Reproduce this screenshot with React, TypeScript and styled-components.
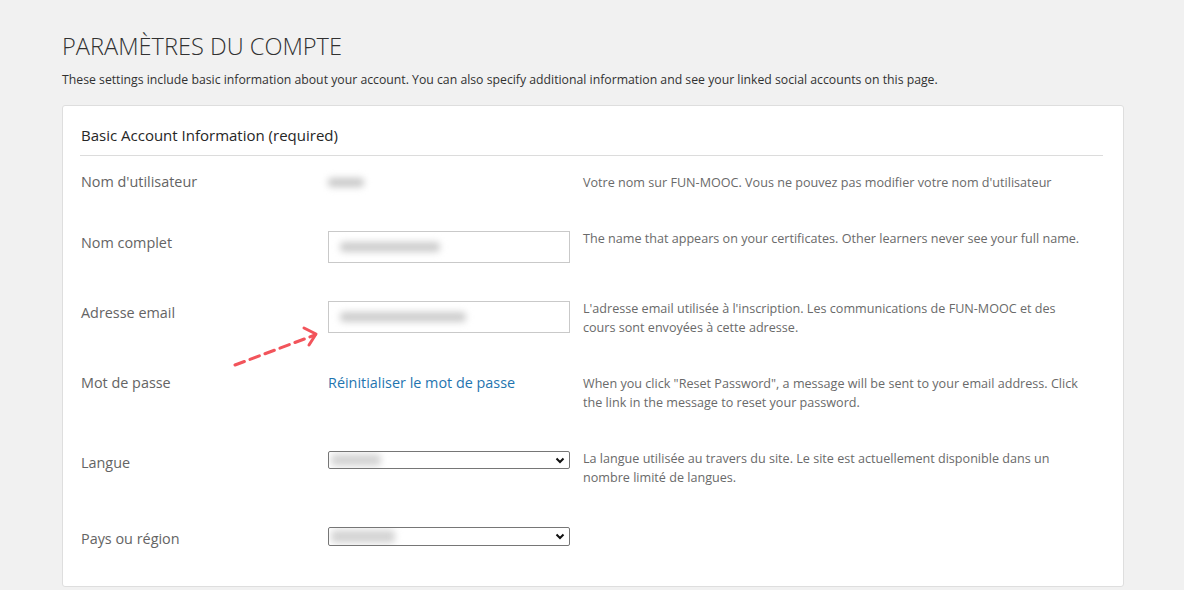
import React from "react";
import styled, { createGlobalStyle } from "styled-components";

const GlobalStyle = createGlobalStyle`
  html, body { margin: 0; padding: 0; }
  body {
    background: #f1f1f1;
    font-family: "Open Sans", "Noto Sans", "DejaVu Sans", sans-serif;
    color: #313131;
  }
`;

const Page = styled.main`
  padding: 32px 60px 0 62px;
`;

const Title = styled.h1`
  margin: 0;
  font-size: 23.6px;
  line-height: 29px;
  font-weight: 300;
  color: #313131;
`;

const Intro = styled.p`
  margin: 10px 0 0;
  font-size: 12.25px;
  line-height: 18px;
  color: #313131;
`;

const Card = styled.section`
  position: relative;
  margin-top: 16px;
  background: #fff;
  border: 1px solid #dedede;
  border-radius: 3px;
  padding: 0 20px 0 17px;
  height: 482px;
  box-sizing: border-box;
`;

const CardHeader = styled.h2`
  margin: 0;
  padding: 19px 0 10px 1px;
  font-size: 15px;
  line-height: 20px;
  font-weight: 400;
  color: #262626;
  border-bottom: 1px solid #dcdcdc;
`;

const Rows = styled.div`
  padding-top: 14px;
`;

const Row = styled.div<{ $h: number }>`
  display: grid;
  grid-template-columns: 235px 242px 502px;
  column-gap: 13px;
  align-items: start;
  height: ${(p) => p.$h}px;
`;

const Label = styled.div`
  margin-top: 2px;
  padding-left: 1px;
  font-size: 14.4px;
  line-height: 20px;
  color: #646464;
`;

const Help = styled.div<{ $offset: number }>`
  margin-top: ${(p) => p.$offset}px;
  font-size: 12.6px;
  line-height: 19px;
  color: #6a6a6a;
`;

const StaticValue = styled.div`
  height: 20px;
  margin-top: 2px;
  display: flex;
  align-items: center;
`;

const Blur = styled.span<{ $w: number; $h: number; $ml: number; $tone: string }>`
  display: block;
  width: ${(p) => p.$w}px;
  height: ${(p) => p.$h}px;
  margin-left: ${(p) => p.$ml}px;
  background: ${(p) => p.$tone};
  border-radius: 4px;
  filter: blur(3.5px);
`;

const TextField = styled.div`
  height: 32px;
  box-sizing: border-box;
  border: 1px solid #c9c9c9;
  background: #fff;
  display: flex;
  align-items: center;
  overflow: hidden;
`;

const Link = styled.a`
  display: block;
  margin-top: 2px;
  font-size: 14.4px;
  line-height: 20px;
  color: #1f75b0;
  text-decoration: none;
`;

const SelectBox = styled.div<{ $h: number }>`
  height: ${(p) => p.$h}px;
  box-sizing: border-box;
  border: 1px solid #767676;
  border-radius: 2px;
  background: #fff;
  display: flex;
  align-items: center;
  justify-content: space-between;
  padding-right: 4px;
  overflow: hidden;
`;

const Chevron = styled.svg`
  width: 10px;
  height: 7px;
  flex: none;
`;

const Annotation = styled.svg`
  position: absolute;
  left: 166px;
  top: 219px;
  width: 100px;
  height: 50px;
  overflow: visible;
`;

function Select({ h, w }: { h: number; w: number }) {
  return (
    <SelectBox $h={h}>
      <Blur $w={w} $h={h - 6} $ml={2} $tone="#d4d4d4" />
      <Chevron viewBox="0 0 10 7">
        <path d="M1.5 1.5 L5 5 L8.5 1.5" fill="none" stroke="#111" strokeWidth="2" />
      </Chevron>
    </SelectBox>
  );
}

export default function App() {
  return (
    <>
      <GlobalStyle />
      <Page>
        <Title>PARAMÈTRES DU COMPTE</Title>
        <Intro>
          These settings include basic information about your account. You can also specify additional
          information and see your linked social accounts on this page.
        </Intro>
        <Card>
          <CardHeader>Basic Account Information (required)</CardHeader>
          <Rows>
            <Row $h={61}>
              <Label>Nom d'utilisateur</Label>
              <StaticValue>
                <Blur $w={36} $h={9} $ml={0} $tone="#c8c8c8" />
              </StaticValue>
              <Help $offset={3}>
                Votre nom sur FUN-MOOC. Vous ne pouvez pas modifier votre nom d'utilisateur
              </Help>
            </Row>
            <Row $h={70}>
              <Label>Nom complet</Label>
              <TextField>
                <Blur $w={100} $h={10} $ml={11} $tone="#cdcdcd" />
              </TextField>
              <Help $offset={-2}>
                The name that appears on your certificates. Other learners never see your full name.
              </Help>
            </Row>
            <Row $h={70}>
              <Label>Adresse email</Label>
              <TextField>
                <Blur $w={126} $h={10} $ml={11} $tone="#cdcdcd" />
              </TextField>
              <Help $offset={-2}>
                L'adresse email utilisée à l'inscription. Les communications de FUN-MOOC et des cours
                sont envoyées à cette adresse.
              </Help>
            </Row>
            <Row $h={80}>
              <Label>Mot de passe</Label>
              <Link href="#">Réinitialiser le mot de passe</Link>
              <Help $offset={3}>
                When you click "Reset Password", a message will be sent to your email address. Click
                the link in the message to reset your password.
              </Help>
            </Row>
            <Row $h={76}>
              <Label>Langue</Label>
              <Select h={18} w={50} />
              <Help $offset={-2}>
                La langue utilisée au travers du site. Le site est actuellement disponible dans un
                nombre limité de langues.
              </Help>
            </Row>
            <Row $h={60}>
              <Label>Pays ou région</Label>
              <Select h={19} w={64} />
              <Help $offset={0} />
            </Row>
          </Rows>
          <Annotation viewBox="0 0 100 50">
            <path
              d="M6 40 L86 10"
              fill="none"
              stroke="#f2545b"
              strokeWidth="3"
              strokeDasharray="10 6"
              strokeLinecap="round"
            />
            <path
              d="M75 3 L87 9 L80 20"
              fill="none"
              stroke="#f2545b"
              strokeWidth="3"
              strokeLinecap="round"
              strokeLinejoin="round"
            />
          </Annotation>
        </Card>
      </Page>
    </>
  );
}
